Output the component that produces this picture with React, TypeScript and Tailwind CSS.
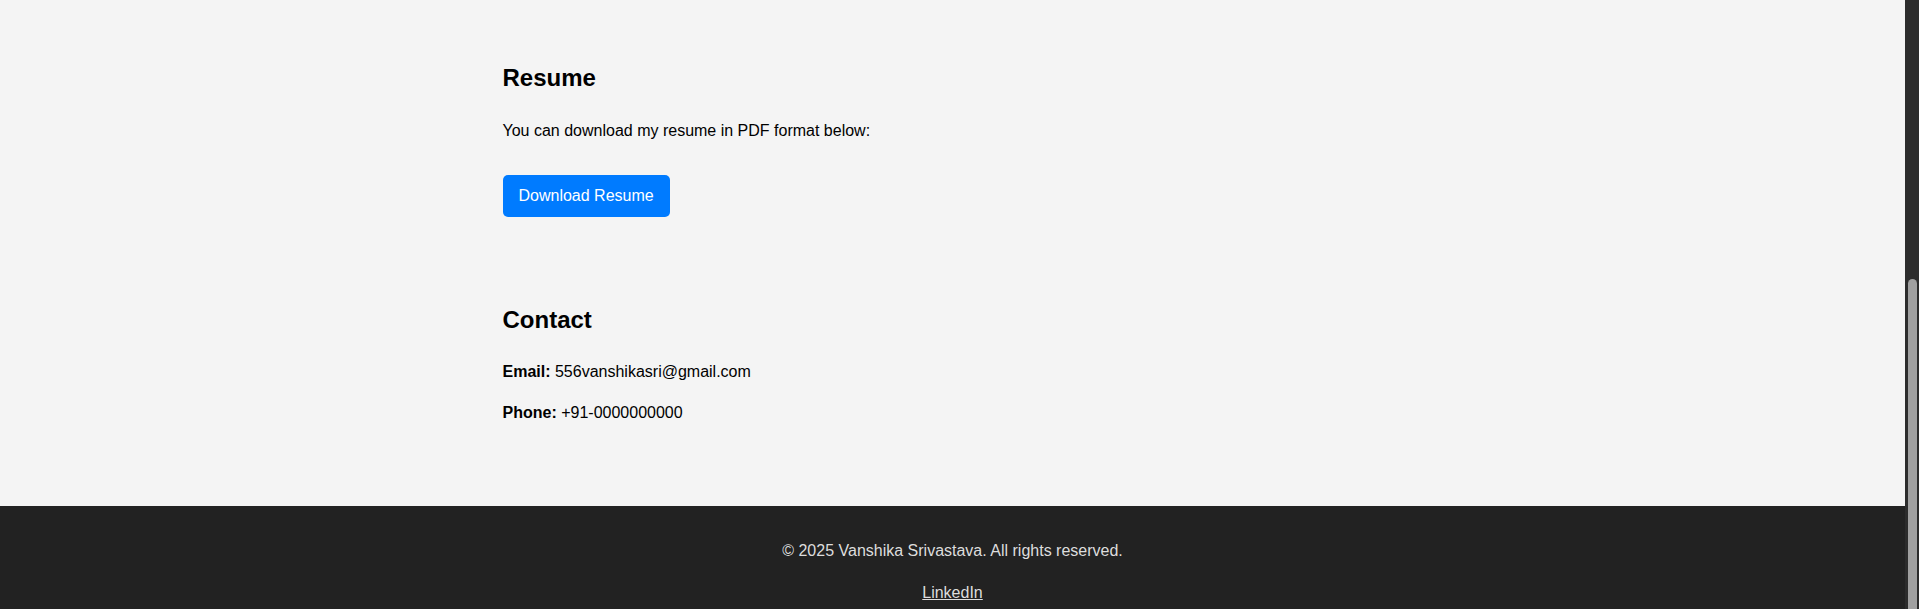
export default function App() {
	return (
		<div className="flex h-[609px] w-full overflow-hidden bg-[#f4f4f4] font-['Liberation_Sans',Arial,sans-serif] text-black">
			<div className="flex min-w-0 flex-1 flex-col">
				{/* Main sections */}
				<main className="flex-1">
					<div className="mx-auto w-[900px] pt-[64px]">
						<section>
							<h2 className="text-[24px] font-bold leading-[28px]">Resume</h2>
							<p className="mt-[29.5px] text-[16px] leading-[18px]">
								You can download my resume in PDF format below:
							</p>
							<button
								type="button"
								className="mt-[35.5px] rounded-[5px] bg-[#007bff] px-4 py-3 text-[16px] leading-[18px] text-white"
							>
								Download Resume
							</button>
						</section>

						<section className="mt-[88.5px]">
							<h2 className="text-[24px] font-bold leading-[28px]">Contact</h2>
							<p className="mt-[29px] text-[16px] leading-[18px]">
								<strong>Email:</strong> 556vanshikasri@gmail.com
							</p>
							<p className="mt-[23px] text-[16px] leading-[18px]">
								<strong>Phone:</strong> +91-0000000000
							</p>
						</section>
					</div>
				</main>

				{/* Footer */}
				<footer className="h-[103px] shrink-0 bg-[#222222] pt-[35.5px] text-center text-[16px] leading-[18px] text-[#dddddd]">
					<p>© 2025 Vanshika Srivastava. All rights reserved.</p>
					<p className="mt-[24px]">
						<a href="#" className="text-[#dddddd] underline">
							LinkedIn
						</a>
					</p>
				</footer>
			</div>

			{/* Scrollbar */}
			<div className="flex w-[14px] shrink-0 flex-col bg-[#2c2c2c] pl-[3px] pr-[2px] pt-[279px]">
				<div className="flex-1 rounded-t-[5px] bg-[#a0a0a0]" />
			</div>
		</div>
	);
}
